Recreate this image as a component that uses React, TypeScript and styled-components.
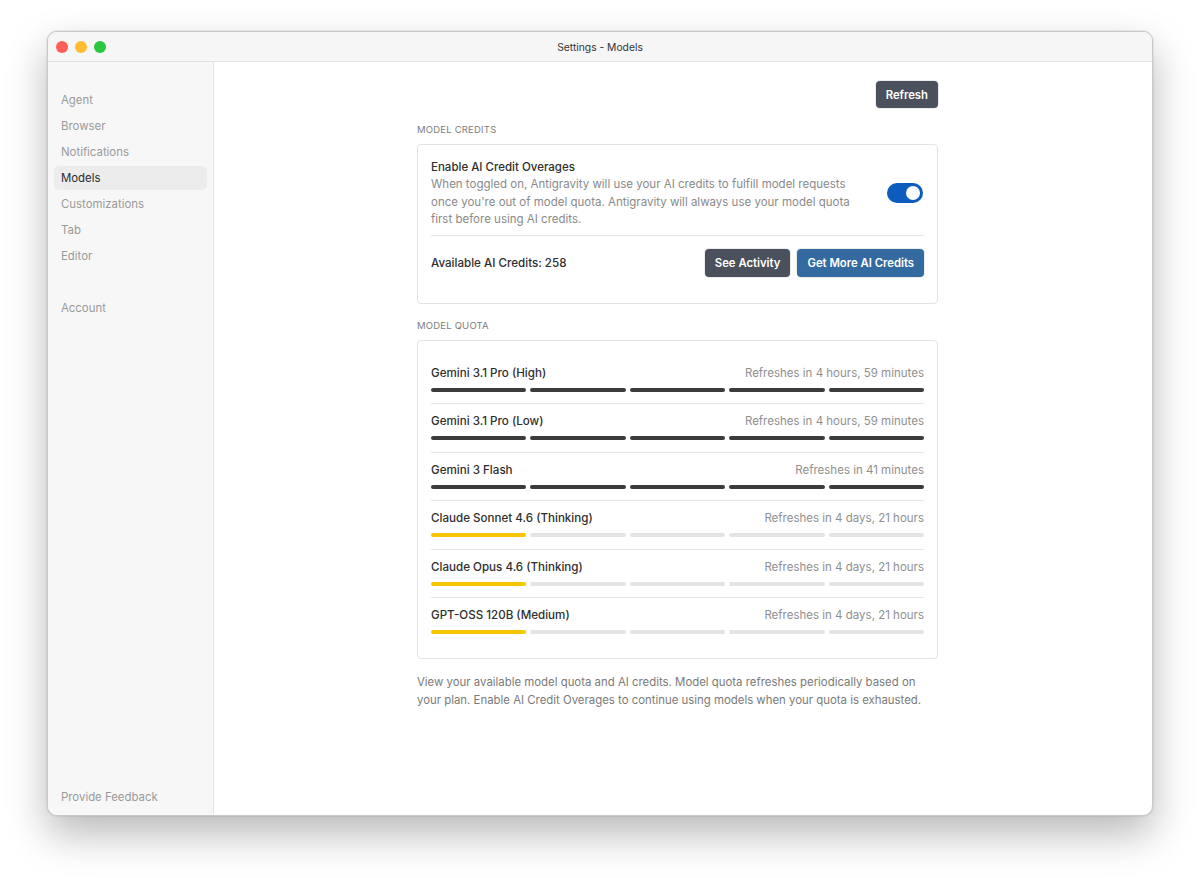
import React from "react";
import styled, { createGlobalStyle } from "styled-components";

const Global = createGlobalStyle`
  html, body { margin: 0; padding: 0; background: #ffffff; }
  body { font-family: Inter, "Noto Sans", "Liberation Sans", sans-serif; -webkit-font-smoothing: antialiased; }
`;

const Stage = styled.div`
  width: 1200px;
  height: 878px;
  padding: 31px 47px 0 47px;
  box-sizing: border-box;
`;

const Window = styled.div`
  width: 1106px;
  height: 785px;
  border-radius: 10px;
  border: 1px solid #c9c9c9;
  box-sizing: border-box;
  overflow: hidden;
  display: flex;
  flex-direction: column;
  background: #ffffff;
  box-shadow: 0 18px 40px rgba(0, 0, 0, 0.28), 0 0 2px rgba(0, 0, 0, 0.2);
`;

const TitleBar = styled.div`
  height: 29px;
  flex: none;
  display: flex;
  align-items: center;
  position: relative;
  background: #f6f6f6;
  border-bottom: 1px solid #e2e2e2;
`;

const Lights = styled.div`
  display: flex;
  gap: 7px;
  padding-left: 8px;
`;

const Light = styled.span<{ $c: string }>`
  width: 12px;
  height: 12px;
  border-radius: 50%;
  background: ${(p) => p.$c};
`;

const Title = styled.div`
  position: absolute;
  left: 0;
  right: 0;
  text-align: center;
  font-size: 10.3px;
  color: #333;
  pointer-events: none;
`;

const Body = styled.div`
  flex: 1;
  display: flex;
  min-height: 0;
`;

const Sidebar = styled.nav`
  width: 166px;
  flex: none;
  background: #f7f7f7;
  border-right: 1px solid #e3e3e3;
  display: flex;
  flex-direction: column;
  padding: 26px 6px 4px 6px;
  box-sizing: border-box;
`;

const NavItem = styled.div<{ $active?: boolean }>`
  height: 24px;
  margin-bottom: 2px;
  display: flex;
  align-items: center;
  padding-left: 7px;
  border-radius: 5px;
  font-size: 11.4px;
  color: ${(p) => (p.$active ? "#2b2b2b" : "#9a9a9a")};
  background: ${(p) => (p.$active ? "#ececec" : "transparent")};
`;

const NavGap = styled.div<{ $h?: number }>`
  height: ${(p) => (p.$h ? `${p.$h}px` : "auto")};
  flex: ${(p) => (p.$h ? "none" : "1")};
`;

const Main = styled.main`
  flex: 1;
  display: flex;
  justify-content: center;
  padding: 19px 11px 0 0;
`;

const Column = styled.div`
  width: 521px;
  display: flex;
  flex-direction: column;
`;

const TopRow = styled.div`
  display: flex;
  justify-content: flex-end;
  margin-bottom: 16px;
`;

const Button = styled.button<{ $tone?: "dark" | "blue" }>`
  height: 28px;
  padding: 0 10px;
  border: none;
  border-radius: 4px;
  font-family: inherit;
  font-size: 11.3px;
  font-weight: 600;
  color: #ffffff;
  background: ${(p) => (p.$tone === "blue" ? "#336aa0" : "#4a515c")};
  box-shadow: 0 0 0 1px rgba(0, 0, 0, 0.08);
  cursor: pointer;
`;

const RefreshButton = styled(Button)`
  height: 27px;
`;

const SectionLabel = styled.div`
  font-size: 9.5px;
  line-height: 12px;
  letter-spacing: 0.2px;
  color: #7d7d7d;
  text-transform: uppercase;
  margin-bottom: 8px;
`;

const Card = styled.div<{ $pt: number; $pb: number; $mb: number }>`
  border: 1px solid #e3e3e3;
  border-radius: 4px;
  padding: ${(p) => p.$pt}px 13px ${(p) => p.$pb}px 13px;
  margin-bottom: ${(p) => p.$mb}px;
`;

const ToggleRow = styled.div`
  display: flex;
  align-items: center;
  gap: 24px;
  padding-bottom: 6px;
  border-bottom: 1px solid #e6e6e6;
`;

const ToggleText = styled.div`
  flex: 1;
`;

const Heading = styled.div`
  font-size: 11.5px;
  font-weight: 500;
  color: #2e2e2e;
  line-height: 17px;
`;

const Desc = styled.div`
  font-size: 11.5px;
  color: #8a8a8a;
  line-height: 17.5px;
`;

const Switch = styled.div`
  width: 36px;
  height: 20px;
  border-radius: 10px;
  background: #0b5cbd;
  display: flex;
  align-items: center;
  justify-content: flex-end;
  padding: 0 3px;
  margin: 0 1px 1px 0;
  box-sizing: border-box;
  flex: none;
`;

const Knob = styled.span`
  width: 14px;
  height: 14px;
  border-radius: 50%;
  background: #ffffff;
`;

const CreditsRow = styled.div`
  display: flex;
  align-items: center;
  padding-top: 13px;
  gap: 7px;
`;

const CreditsLabel = styled.div`
  flex: 1;
  font-size: 11.6px;
  font-weight: 500;
  color: #2e2e2e;
`;

const QuotaRow = styled.div<{ $last?: boolean }>`
  padding: 9px 0 ${(p) => (p.$last ? "0" : "11.5px")};
  border-bottom: ${(p) => (p.$last ? "none" : "1px solid #e6e6e6")};
`;

const QuotaHead = styled.div`
  display: flex;
  justify-content: space-between;
  align-items: center;
  height: 16px;
  margin-bottom: 7px;
`;

const ModelName = styled.span`
  font-size: 11.6px;
  font-weight: 500;
  color: #2e2e2e;
`;

const RefreshText = styled.span`
  font-size: 11.5px;
  color: #8f8f8f;
`;

const Bars = styled.div`
  display: grid;
  grid-template-columns: repeat(5, 1fr);
  gap: 4px;
`;

const Seg = styled.div<{ $fill: "dark" | "yellow" | "empty" }>`
  height: 4px;
  border-radius: 2px;
  background: ${(p) =>
    p.$fill === "dark" ? "#3b3b3b" : p.$fill === "yellow" ? "#f7c600" : "#e4e4e4"};
`;

const Footnote = styled.p`
  margin: 0;
  font-size: 11.4px;
  line-height: 18px;
  color: #7a7a7a;
`;

type Quota = { name: string; refresh: string; filled: number; tone: "dark" | "yellow" };

const quotas: Quota[] = [
  { name: "Gemini 3.1 Pro (High)", refresh: "Refreshes in 4 hours, 59 minutes", filled: 5, tone: "dark" },
  { name: "Gemini 3.1 Pro (Low)", refresh: "Refreshes in 4 hours, 59 minutes", filled: 5, tone: "dark" },
  { name: "Gemini 3 Flash", refresh: "Refreshes in 41 minutes", filled: 5, tone: "dark" },
  { name: "Claude Sonnet 4.6 (Thinking)", refresh: "Refreshes in 4 days, 21 hours", filled: 1, tone: "yellow" },
  { name: "Claude Opus 4.6 (Thinking)", refresh: "Refreshes in 4 days, 21 hours", filled: 1, tone: "yellow" },
  { name: "GPT-OSS 120B (Medium)", refresh: "Refreshes in 4 days, 21 hours", filled: 1, tone: "yellow" },
];

const navTop = ["Agent", "Browser", "Notifications", "Models", "Customizations", "Tab", "Editor"];

export default function App() {
  return (
    <>
      <Global />
      <Stage>
        <Window>
          <TitleBar>
            <Lights>
              <Light $c="#ff5f57" />
              <Light $c="#febc2e" />
              <Light $c="#28c840" />
            </Lights>
            <Title>Settings - Models</Title>
          </TitleBar>
          <Body>
            <Sidebar>
              {navTop.map((n) => (
                <NavItem key={n} $active={n === "Models"}>
                  {n}
                </NavItem>
              ))}
              <NavGap $h={26} />
              <NavItem>Account</NavItem>
              <NavGap />
              <NavItem>Provide Feedback</NavItem>
            </Sidebar>
            <Main>
              <Column>
                <TopRow>
                  <RefreshButton>Refresh</RefreshButton>
                </TopRow>
                <SectionLabel>Model Credits</SectionLabel>
                <Card $pt={14} $pb={26} $mb={16}>
                  <ToggleRow>
                    <ToggleText>
                      <Heading>Enable AI Credit Overages</Heading>
                      <Desc>
                        When toggled on, Antigravity will use your AI credits to fulfill model requests
                        once you're out of model quota. Antigravity will always use your model quota
                        first before using AI credits.
                      </Desc>
                    </ToggleText>
                    <Switch>
                      <Knob />
                    </Switch>
                  </ToggleRow>
                  <CreditsRow>
                    <CreditsLabel>Available AI Credits: 258</CreditsLabel>
                    <Button>See Activity</Button>
                    <Button $tone="blue">Get More AI Credits</Button>
                  </CreditsRow>
                </Card>
                <SectionLabel>Model Quota</SectionLabel>
                <Card $pt={15} $pb={24} $mb={14}>
                  {quotas.map((q, i) => (
                    <QuotaRow key={q.name} $last={i === quotas.length - 1}>
                      <QuotaHead>
                        <ModelName>{q.name}</ModelName>
                        <RefreshText>{q.refresh}</RefreshText>
                      </QuotaHead>
                      <Bars>
                        {[0, 1, 2, 3, 4].map((s) => (
                          <Seg key={s} $fill={s < q.filled ? q.tone : "empty"} />
                        ))}
                      </Bars>
                    </QuotaRow>
                  ))}
                </Card>
                <Footnote>
                  View your available model quota and AI credits. Model quota refreshes periodically based on
                  your plan. Enable AI Credit Overages to continue using models when your quota is exhausted.
                </Footnote>
              </Column>
            </Main>
          </Body>
        </Window>
      </Stage>
    </>
  );
}
